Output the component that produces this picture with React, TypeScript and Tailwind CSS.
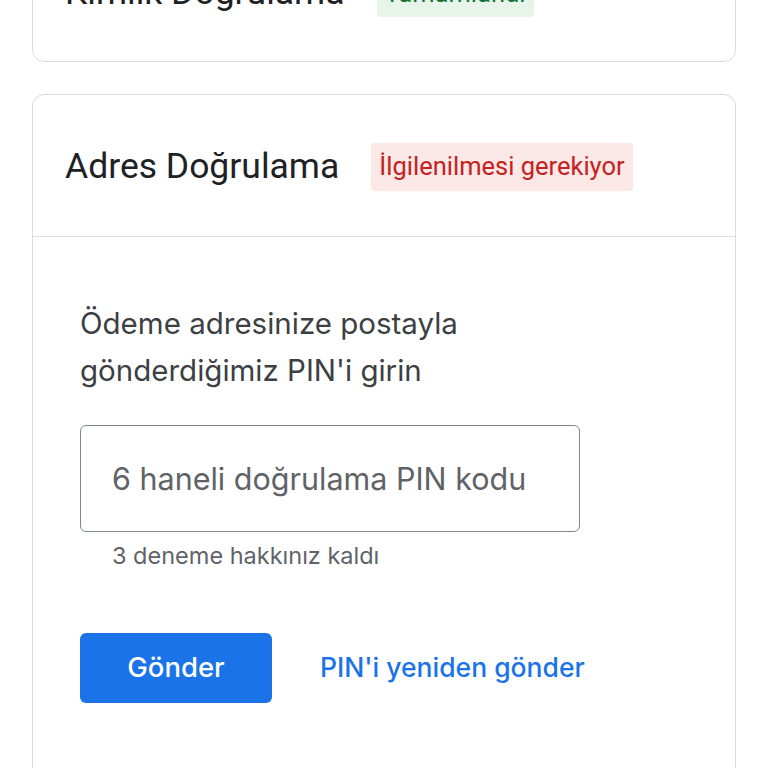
import React from 'react';

type Status = 'done' | 'action';

const badgeStyles: Record<Status, string> = {
  done: 'bg-[#e6f4ea] text-[#137333]',
  action: 'bg-[#fce8e6] text-[#c5221f]',
};

const StatusBadge: React.FC<{ status: Status; label: string }> = ({ status, label }) => (
  <span
    className={`inline-flex h-[48px] items-center rounded-[3px] px-[8px] text-[25.5px] font-['Roboto',sans-serif] ${badgeStyles[status]}`}
  >
    {label}
  </span>
);

const CardHeader: React.FC<{ title: string; status: Status; label: string; className?: string }> = ({
  title,
  status,
  label,
  className = '',
}) => (
  <div className={`flex items-center gap-[32px] px-[32px] ${className}`}>
    <h2 className="text-[35.5px] font-normal text-[#202124] font-['Roboto',sans-serif]">{title}</h2>
    <StatusBadge status={status} label={label} />
  </div>
);

const App: React.FC = () => {
  return (
    <div className="h-[768px] overflow-hidden bg-white px-[32px]">
      {/* Kimlik kartı, yukarı kaydırılmış */}
      <div className="mt-[-82px] rounded-[12px] border border-[#dadce0]">
        <CardHeader title="Kimlik Doğrulama" status="done" label="Tamamlandı" className="h-[142px] pt-[6px]" />
      </div>

      {/* Adres kartı */}
      <div className="mt-[32px] rounded-[12px] border border-[#dadce0]">
        <CardHeader
          title="Adres Doğrulama"
          status="action"
          label="İlgilenilmesi gerekiyor"
          className="h-[142px] border-b border-[#e0e0e0] pt-[2px]"
        />

        <div className="px-[47px] pt-[63px] pb-[80px] font-['Inter',sans-serif]">
          <p className="w-[440px] text-[29.5px] leading-[47px] text-[#3c4043]">
            Ödeme adresinize postayla gönderdiğimiz PIN'i girin
          </p>

          <input
            type="text"
            placeholder="6 haneli doğrulama PIN kodu"
            className="mt-[31px] block h-[107px] w-[500px] rounded-[6px] border-[1.5px] border-[#80868b] px-[31px] text-[30.5px] text-[#202124] outline-none placeholder:text-[#5f6368]"
          />
          <div className="mt-[10px] pl-[32px] text-[23.5px] leading-[28px] text-[#5f6368]">3 deneme hakkınız kaldı</div>

          <div className="mt-[63px] flex items-center gap-[48px]">
            <button className="h-[70px] w-[192px] rounded-[6px] bg-[#1a73e8] text-[27.5px] font-medium text-white">
              Gönder
            </button>
            <button className="text-[26.5px] font-medium text-[#1a73e8]">PIN'i yeniden gönder</button>
          </div>
        </div>
      </div>
    </div>
  );
};

export default App;
